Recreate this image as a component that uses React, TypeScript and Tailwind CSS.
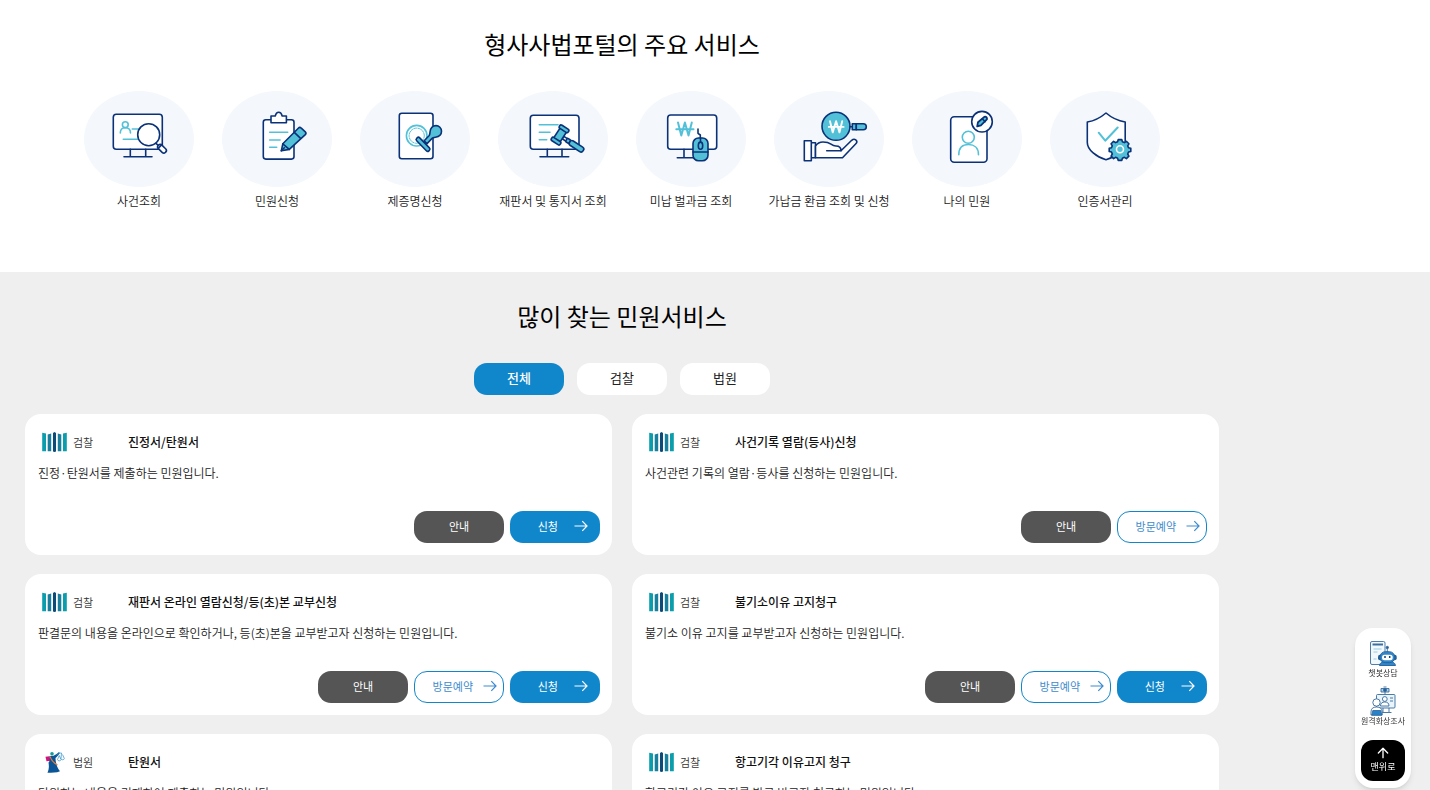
import React, { useState } from 'react';
import { ArrowUp } from 'lucide-react';

const NAVY = '#0b3278';
const CYAN = '#52c1d8';

interface Service {
  label: string;
  icon: React.ReactNode;
}

type Org = '검찰' | '법원';
type Action = '안내' | '방문예약' | '신청';

interface Petition {
  org: Org;
  title: string;
  desc: string;
  actions: Action[];
}

const CaseSearchIcon = () => (
  <>
    <rect x="29.3" y="23.3" width="49" height="35" rx="3" fill="#fff" />
    <path d="M46.3 58.3v7.4M61.7 58.3v7.4M40 65.7h28" />
    <g stroke={CYAN}>
      <circle cx="41.3" cy="33.7" r="2.9" />
      <path d="M36.3 42c0-3.6 2.2-5.2 5-5.2s5.2 1.6 5.2 5.2M48.3 38h6M39.3 48.3H55" />
    </g>
    <circle cx="64.7" cy="43.7" r="11" fill="#fff" />
    <path d="M72 52.3l3 2.8" />
    <rect x="73" y="54.8" width="10" height="5" rx="2.4" transform="rotate(44 77.5 57.5)" fill="#fff" />
    <path d="M77.8 53.6l-3.4 3.6" />
  </>
);

const PetitionIcon = () => (
  <>
    <rect x="41.3" y="28.7" width="30.7" height="39.4" rx="2.5" fill="#fff" />
    <path d="M49 25h4.2c.6-2.4 1.8-3.7 3.5-3.7s2.9 1.3 3.5 3.7h4.2v6.7H49z" fill="#fff" />
    <path d="M47.7 41.3h18M47.7 49h10.4M47.7 56.3h7" stroke={CYAN} />
    <path d="M59.3 59.8l1.5-7L76.3 37.2c1-1 2-1 3 0l4 3.6c.9.9.9 1.8 0 2.8L67.3 58.4z" fill={CYAN} />
    <path d="M60.8 52.8l6.5 5.6M72.3 41.3l6.3 6M59.3 59.8l3-3" />
  </>
);

const CertificateIcon = () => (
  <>
    <rect x="39.3" y="22.3" width="33.7" height="45.4" rx="2.5" fill="#fff" />
    <g stroke={CYAN}>
      <circle cx="56.7" cy="44.7" r="10.3" />
      <circle cx="56.7" cy="44.7" r="7.6" strokeDasharray="2.5 1.2" strokeWidth="1" />
    </g>
    <path d="M64.2 49.8l4.8-5.1c1-1.2.9-2 1-3.7.3-3.8 2.7-6.4 6-6.4 3 0 5.5 2.5 5.5 5.6 0 3.2-2.6 5.5-6 6-1.8.3-2.7.4-3.7 1.4l-4.8 5.2z" fill={CYAN} />
    <rect x="54.3" y="51.2" width="17.5" height="4.2" rx="1.8" transform="rotate(46 63 53.3)" fill={CYAN} />
  </>
);

const RulingIcon = () => (
  <>
    <rect x="32.3" y="24.3" width="48.7" height="34" rx="3" fill="#fff" />
    <path d="M49.3 58.3v7.4M64 58.3v7.4M42 65.7h28.7" />
    <path d="M41.3 33.7H60M41.3 41.3H52M41.3 48.7h7.4" stroke={CYAN} />
    <g transform="rotate(33 62 44)" fill={CYAN}>
      <path d="M66 43h5v3h-5z" fill="#fff" />
      <rect x="70" y="42.5" width="4" height="4" rx="1" />
      <rect x="74" y="41.8" width="16" height="5.4" rx="2.4" />
      <rect x="58.3" y="38" width="7.6" height="12" />
      <rect x="56.7" y="34.7" width="10.6" height="3.8" rx="1.7" />
      <rect x="56.7" y="49.4" width="10.6" height="3.8" rx="1.7" />
    </g>
  </>
);

const FineIcon = () => (
  <>
    <rect x="31.7" y="24" width="49" height="34.3" rx="3" fill="#fff" />
    <path d="M48 58.3v8M41.3 66.7H58" />
    <path d="M42 31.5l3.3 13 3.6-13 3.6 13 3.3-13M40.3 38.2h17.2" stroke={CYAN} strokeWidth="2" />
    <path d="M64.3 47v-3L62 42.3V38" />
    <rect x="57" y="47" width="15" height="22.7" rx="5.5" fill={CYAN} />
    <path d="M57 61h15M64.5 47v4" />
    <ellipse cx="64.5" cy="54.7" rx="2.2" ry="3.6" />
  </>
);

const RefundIcon = () => (
  <>
    <circle cx="62" cy="35.3" r="14" fill={CYAN} />
    <path d="M56 30.2l2.7 11.2 3.4-11.2 3.4 11.2 2.7-11.2M54.8 35.9h14.8" stroke="#fff" strokeWidth="1.9" />
    <path d="M76 35.7h2.3" />
    <rect x="78.3" y="32.7" width="4" height="6" fill={CYAN} />
    <path d="M82.3 32.7h7a3 3 0 010 6h-7z" fill={CYAN} />
    <path d="M37.3 51.8h4.2v14.9h-4.2" fill="#fff" />
    <path d="M41.5 55c2-3 5-4 7.5-4 3 0 5.5.3 8 2.2 1.6 1.2 2.8 1.8 5 1.8 3.5 0 5 1.5 5 4.7l10.7-10.4c2.9-2.6 6.3.3 4.6 2.9L68.5 66.7h-27z" fill="#fff" />
    <path d="M52.7 59.7H67" />
    <rect x="30.3" y="49.7" width="7" height="20" fill="#fff" />
  </>
);

const MyPetitionIcon = () => (
  <>
    <rect x="38.7" y="25.7" width="36.3" height="45.6" rx="3.5" fill="#fff" />
    <g stroke={CYAN}>
      <circle cx="56.3" cy="46.3" r="6" />
      <path d="M46.8 63.7c0-7 4-10.2 9.7-10.2s10 3.2 10 10.2" />
    </g>
    <circle cx="70" cy="30.7" r="10.3" fill="#fff" />
    <path d="M65.2 35.4l.8-4.2 6.3-5.3c1.7-.7 3.2.8 2.6 2.5l-6 5.9z" fill={CYAN} strokeWidth="1.8" />
    <path d="M70.3 27.8l2.8 2.9" />
  </>
);

const CertManageIcon = () => (
  <>
    <path d="M56 22c5.6 4.8 11.5 7.7 19.2 9v20.5c0 7.5-9.7 14.7-19.2 17.2-9.3-2.5-18.7-9.7-18.7-17.2V31C45 29.7 50.4 26.8 56 22z" fill="#fff" />
    <path d="M48.7 41.7l6.5 8L67.7 36.5" stroke={CYAN} strokeWidth="2" />
    <g transform="translate(70 58.3)">
      <path
        d="M-1.8-9.7h3.6l.6 2.2 2 .8 2-1.3 2.5 2.5-1.2 2 .8 1.9 2.3.6v3.2l-2.3.6-.8 1.9 1.2 2.1-2.5 2.5-2-1.3-2 .9-.6 2.2h-3.6l-.6-2.2-2-.9-2 1.3-2.5-2.5 1.2-2.1-.8-1.9-2.3-.6v-3.2l2.3-.6.8-1.9-1.2-2 2.5-2.5 2 1.3 2-.8z"
        fill={CYAN}
      />
      <circle r="3.5" stroke="#fff" />
    </g>
  </>
);

const services: Service[] = [
  { label: '사건조회', icon: <CaseSearchIcon /> },
  { label: '민원신청', icon: <PetitionIcon /> },
  { label: '제증명신청', icon: <CertificateIcon /> },
  { label: '재판서 및 통지서 조회', icon: <RulingIcon /> },
  { label: '미납 벌과금 조회', icon: <FineIcon /> },
  { label: '가납금 환급 조회 및 신청', icon: <RefundIcon /> },
  { label: '나의 민원', icon: <MyPetitionIcon /> },
  { label: '인증서관리', icon: <CertManageIcon /> },
];

const petitions: Petition[] = [
  { org: '검찰', title: '진정서/탄원서', desc: '진정·탄원서를 제출하는 민원입니다.', actions: ['안내', '신청'] },
  { org: '검찰', title: '사건기록 열람(등사)신청', desc: '사건관련 기록의 열람·등사를 신청하는 민원입니다.', actions: ['안내', '방문예약'] },
  { org: '검찰', title: '재판서 온라인 열람신청/등(초)본 교부신청', desc: '판결문의 내용을 온라인으로 확인하거나, 등(초)본을 교부받고자 신청하는 민원입니다.', actions: ['안내', '방문예약', '신청'] },
  { org: '검찰', title: '불기소이유 고지청구', desc: '불기소 이유 고지를 교부받고자 신청하는 민원입니다.', actions: ['안내', '방문예약', '신청'] },
  { org: '법원', title: '탄원서', desc: '탄원하는 내용을 기재하여 제출하는 민원입니다.', actions: ['안내', '신청'] },
  { org: '검찰', title: '항고기각 이유고지 청구', desc: '항고기각 이유 고지를 발급 받고자 청구하는 민원입니다.', actions: ['안내', '신청'] },
];

const tabs = ['전체', '검찰', '법원'];

const ProsecutionLogo = () => (
  <svg viewBox="0 0 25 20" className="w-[25px] h-5 shrink-0" aria-hidden="true">
    <path d="M.2.7l3.8.8v17.7H.2zM24.8.7l-3.8.8v17.7h3.8z" fill="#0a9dab" />
    <path d="M5.7 2.4l3.5-.8v17.6H5.7zM19.3 2.4l-3.5-.8v17.6h3.5z" fill="#187f9c" />
    <path d="M11 1l1.5-1L14 1v18.5l-1.5.5-1.5-.5z" fill="#0c4b78" />
  </svg>
);

const CourtLogo = () => (
  <svg viewBox="0 0 25 22" className="w-[25px] h-[22px] shrink-0" aria-hidden="true">
    <path d="M3.5 5.8l4-.6 1 4.500-4 .6z" fill="#d5127b" />
    <circle cx="10" cy="2.8" r="1.8" fill="#129b9a" />
    <path d="M7.5 5l4-.2c2-.8 3.5-2 5.5-3.8l.8.9c-1.3 2.2-2.6 3.7-4.3 5.1.1 5 1.500 9.500 4.500 13.300-3.500 1.700-8 1.300-12.500 1.500 1.600-3.500 1.600-7 1-10.300 1.300-.6 1.400-3.500 1-6.500z" fill="#0b5596" />
    <path d="M8 5.5c1.5 4 4.5 7 7.5 8.5" stroke="#e47b3c" strokeWidth="1.2" fill="none" />
    <path d="M14.5 4.5C16 2.5 17.5 2 19.500 2M15.500 8.500a1.800 1.800 0 003.500 0M15.500 8.500l1.700-4 1.800 4M19.500 2l-.5 5.500M19 7.500a1.700 1.700 0 003.300 0L20.500 3.500" stroke="#2b8fc4" strokeWidth=".7" fill="none" />
  </svg>
);

const LongArrow = () => (
  <svg viewBox="0 0 14 12" className="w-[14px] h-3 shrink-0" fill="none" stroke="currentColor" strokeWidth="1.2" aria-hidden="true">
    <path d="M.5 6h12.5M8.3 1.2L13 6l-4.7 4.8" />
  </svg>
);

const ChatbotIcon = () => (
  <svg viewBox="0 0 28 28" className="w-7 h-7" fill="none" stroke="#3c6f9f" strokeWidth=".9" aria-hidden="true">
    <rect x="1.5" y="1.5" width="14.5" height="23" rx="1.5" fill="#f2f9fd" />
    <path d="M3.5 4.5h10.5" strokeWidth="2" />
    <path d="M4.5 9h8M4.5 12h4M4.5 19h3" stroke="#8dc5e2" />
    <path d="M18.3 12V8" />
    <circle cx="18.3" cy="7.5" r="1.2" fill="#235f99" />
    <path d="M10.5 25.5c.5-3 3-4 8-4s7.5 1 8 4z" fill="#3287c9" stroke="#235f99" />
    <rect x="9" y="14.7" width="18.7" height="5.6" rx="2" fill="#235f99" stroke="none" />
    <rect x="11" y="11.7" width="14.7" height="11" rx="5.3" fill="#3287c9" stroke="#235f99" />
    <rect x="13" y="14.7" width="10.7" height="5.5" rx="2.5" fill="#fff" stroke="none" />
    <path d="M16 16v2M20.7 16v2" stroke="#17436f" strokeWidth="1.5" />
  </svg>
);

const VideoIcon = () => (
  <svg viewBox="0 0 28 30" className="w-7 h-[30px]" fill="none" stroke="#386b9c" strokeWidth=".9" aria-hidden="true">
    <path d="M12 2.5h8v3.5h-8zM14.5 1h3M16 6v2.5" fill="#a9d4ea" />
    <circle cx="16" cy="4" r="1.5" fill="#235f99" />
    <rect x="7.5" y="8.5" width="18.5" height="13.5" rx="1" fill="#e9f5fb" />
    <path d="M14 22v4M20 22v4M12.5 26.5h10M21 12h3M21 15h3" />
    <circle cx="15.8" cy="13" r="2.4" fill="#fff" />
    <path d="M11.5 20c0-3 1.8-4 4.3-4s4.2 1 4.2 4z" fill="#fff" />
    <circle cx="7.5" cy="16.5" r="3.7" fill="#fff" />
    <path d="M2 29v-3c0-3.5 2-5 5.5-5s5.7 1.5 5.7 5v3z" fill="#fff" />
    <path d="M3.8 24.5h8l1 4.7h-10z" fill="#2583cc" />
  </svg>
);

const actionStyle: Record<Action, string> = {
  '안내': 'bg-[#555] text-white justify-center',
  '방문예약': 'bg-white text-[#3d8bce] border border-[#1086cb] justify-end gap-[10px] pr-[6px]',
  '신청': 'bg-[#1086cb] text-white justify-end gap-4 pr-3',
};

const PetitionCard: React.FC<{ item: Petition }> = ({ item }) => (
  <article className="bg-white rounded-2xl pl-[13px] pr-3 pt-[14px] pb-3">
    <div className="flex items-center h-7 pl-1">
      <div className="flex items-center gap-[6px] w-[86px]">
        {item.org === '검찰' ? <ProsecutionLogo /> : <CourtLogo />}
        <span className="text-[11px] font-[350] text-[#333]">{item.org}</span>
      </div>
      <h3 className="text-xs font-medium text-[#111]">{item.title}</h3>
    </div>
    <p className="mt-[7px] text-xs leading-5 font-[350] text-[#222]">{item.desc}</p>
    <div className="flex justify-end gap-[6px] mt-7">
      {item.actions.map((action) => (
        <button key={action} type="button" className={`flex items-center w-[90px] h-8 pb-[2px] rounded-[13px] text-[11px] ${actionStyle[action]}`}>
          {action}
          {action !== '안내' && <LongArrow />}
        </button>
      ))}
    </div>
  </article>
);

const App: React.FC = () => {
  const [activeTab, setActiveTab] = useState('전체');

  const visible = activeTab === '전체' ? petitions : petitions.filter(p => p.org === activeTab);

  return (
    <div className="h-screen overflow-hidden bg-[#efefef] font-['Noto_Sans_CJK_KR','Noto_Sans',sans-serif]">
      <section className="bg-white pl-[25px] pr-[211px] pt-6 pb-[61px]">
        <h2 className="text-center text-2xl leading-10 text-black">형사사법포털의 주요 서비스</h2>
        <ul className="flex justify-center mt-[27px]">
          {services.map((service) => (
            <li key={service.label} className="w-[138px]">
              <a href="#" className="flex flex-col items-center gap-1">
                <span className="block bg-[#f4f7fb] rounded-[50%]">
                  <svg viewBox="0 0 110 96" className="block w-[110px] h-24" fill="none" stroke={NAVY} strokeWidth="1.6" strokeLinecap="round" strokeLinejoin="round" aria-hidden="true">
                    {service.icon}
                  </svg>
                </span>
                <span className="text-xs leading-5 font-[350] text-[#222] whitespace-nowrap">{service.label}</span>
              </a>
            </li>
          ))}
        </ul>
      </section>

      <section className="pl-[25px] pr-[211px] pt-6">
        <h2 className="text-center text-2xl leading-10 text-black">많이 찾는 민원서비스</h2>
        <div className="flex justify-center gap-[13px] mt-[27px]">
          {tabs.map((tab) => (
            <button
              key={tab}
              type="button"
              onClick={() => setActiveTab(tab)}
              className={`w-[90px] h-8 pb-[2px] rounded-[13px] text-[13px] ${activeTab === tab ? 'bg-[#1086cb] text-white font-medium' : 'bg-white text-[#222]'}`}
            >
              {tab}
            </button>
          ))}
        </div>
        <div className="grid grid-cols-2 gap-x-5 gap-y-[19px] mt-[19px]">
          {visible.map((item) => (
            <PetitionCard key={item.title} item={item} />
          ))}
        </div>
      </section>

      <aside className="fixed right-[19px] bottom-[2px] flex flex-col items-center w-14 pt-3 pb-[7px] bg-white rounded-[18px] shadow-md text-[8px] leading-[10px] text-[#333]">
        <a href="#" className="flex flex-col items-center">
          <ChatbotIcon />
          <span className="whitespace-nowrap">챗봇상담</span>
        </a>
        <a href="#" className="flex flex-col items-center mt-2">
          <VideoIcon />
          <span className="whitespace-nowrap">원격화상조사</span>
        </a>
        <button type="button" className="flex flex-col items-center justify-center w-11 h-[41px] pb-1 mt-[14px] rounded-xl bg-black text-white text-[9px] leading-3">
          <ArrowUp size={16} strokeWidth={2} />
          맨위로
        </button>
      </aside>
    </div>
  );
};

export default App;
